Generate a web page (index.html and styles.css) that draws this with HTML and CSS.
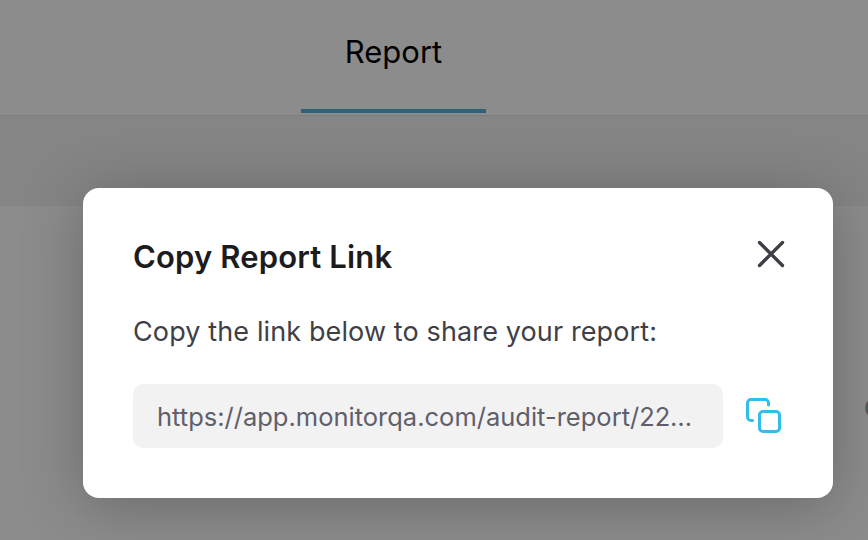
FILE: index.html
```html
<!DOCTYPE html>
<html lang="en">
<head>
<meta charset="utf-8">
<title>Copy Report Link</title>
<link rel="stylesheet" href="styles.css">
</head>
<body>
<div class="page">
  <header class="header">
    <div class="tab">Report</div>
  </header>
  <div class="band"></div>
  <div class="content"><span class="cut">C</span></div>
</div>
<div class="backdrop"></div>
<div class="modal">
  <div class="modal-head">
    <h2 class="title">Copy Report Link</h2>
    <svg class="close" width="28" height="28" viewBox="0 0 28 28" fill="none" stroke="#3f3f46" stroke-width="3.400" stroke-linecap="round"><path d="M2.500 2.500L25.500 25.500M25.500 2.500L2.500 25.500"/></svg>
  </div>
  <p class="desc">Copy the link below to share your report:</p>
  <div class="row">
    <div class="link"><span class="link-text">https://app.monitorqa.com/audit-report/2248a1c4e7</span></div>
    <svg class="copy" width="36" height="36" viewBox="0 0 36 36" fill="none" stroke="#33bdec" stroke-width="3" stroke-linejoin="round" stroke-linecap="round"><rect x="13.500" y="13.500" width="20" height="20" rx="3.500"/><path d="M6.500 22.500H5A3.500 3.500 0 0 1 1.500 19V5A3.500 3.500 0 0 1 5 1.500H19A3.500 3.500 0 0 1 22.500 5V7"/></svg>
  </div>
</div>
</body>
</html>
```
FILE: styles.css
```css
* { box-sizing: border-box; }
html, body { margin: 0; height: 100%; overflow: hidden; }
body { font-family: Inter, "Liberation Sans", sans-serif; background: #fff; }
.page { height: 540px; display: flex; flex-direction: column; }
.header { height: 116px; background: #fff; border-bottom: 1px solid #e4e4e4; display: flex; justify-content: center; }
.tab { width: 185px; height: 113px; margin-left: -81px; border-bottom: 4px solid #4fb6dc; text-align: center; font-size: 31px; line-height: 104px; color: #000; }
.band { height: 90px; background: #f3f3f3; }
.content { flex: 1; background: #fff; display: flex; justify-content: flex-end; padding-top: 188px; }
.cut { font-size: 24px; line-height: 29px; color: #999; margin-right: -14px; width: 18px; }
.backdrop { position: absolute; inset: 0; background: rgba(0,0,0,.45); }
.modal { position: absolute; left: 83px; top: 188px; width: 750px; height: 310px; background: #fff; border-radius: 16px; padding: 50px 50px 0; box-shadow: 0 8px 60px rgba(0,0,0,.25); }
.modal-head { display: flex; justify-content: space-between; align-items: center; height: 38px; }
.title { margin: -2px 0 0; font-size: 31px; font-weight: 600; color: #1c1c1f; letter-spacing: 0.15px; }
.close { align-self: flex-start; margin: 2px -2px 0 0; }
.desc { margin: 38px 0 0; font-size: 27px; line-height: 36px; color: #3f3f46; letter-spacing: 0.12px; }
.row { display: flex; align-items: center; margin-top: 34px; }
.link { width: 590px; height: 64px; background: #f2f2f2; border-radius: 10px; padding: 0 24px; display: flex; align-items: center; }
.link-text { font-size: 25.5px; color: #5f5f6b; white-space: nowrap; overflow: hidden; text-overflow: ellipsis; }
.copy { margin-left: 23px; }
```
